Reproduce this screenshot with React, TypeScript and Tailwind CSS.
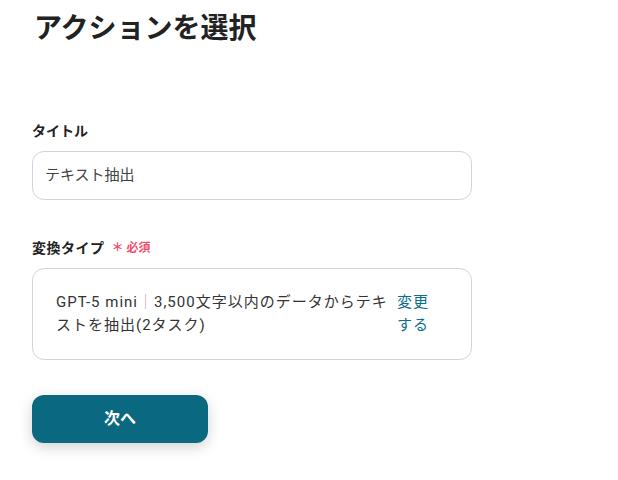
import React from 'react';

const FONT = { fontFamily: 'Roboto, "Noto Sans CJK JP", sans-serif' };

export default function App() {
  return (
    <div className="min-h-screen bg-white pl-[32px] text-[#2b2b2b]" style={FONT}>
      {/* Header */}
      <h1 className="pt-[8px] pl-[2px] text-[28px] font-bold leading-[42px] text-[#222]">アクションを選択</h1>

      {/* Title field */}
      <div className="mt-[71px] w-[440px]">
        <label className="block text-[14px] font-bold leading-[20px] text-[#222]">タイトル</label>
        <div className="mt-[10px] flex h-[49px] items-center rounded-[12px] border border-[#d2d4dc] px-[12px] text-[15px] text-[#444]">
          テキスト抽出
        </div>
      </div>

      {/* Conversion type */}
      <div className="mt-[38px] w-[440px]">
        <div className="flex items-center gap-[7px] leading-[20px]">
          <span className="text-[14px] font-bold tracking-[0.5px] text-[#222]">変換タイプ</span>
          <span className="text-[12px] font-bold text-[#f0506e]">＊ 必須</span>
        </div>
        <div className="mt-[10px] flex items-start rounded-[12px] border border-[#d2d4dc] py-[22px] pl-[23px] pr-[40px]">
          <p className="flex-1 text-[15px] leading-[23px] tracking-[1px] text-[#333]">
            GPT-5 mini<span className="text-[#c9a6b8]">｜</span>3,500文字以内のデータからテキストを抽出(2タスク)
          </p>
          <button className="ml-[8px] w-[34px] shrink-0 text-left text-[15px] leading-[23px] tracking-[1px] text-[#0b6e8a]">変更する</button>
        </div>
      </div>

      {/* Next */}
      <button className="mt-[35px] flex h-[48px] w-[176px] items-center justify-center rounded-[12px] bg-[#0b6881] text-[16px] font-bold text-white shadow-[0_4px_14px_rgba(0,0,0,0.18)]">
        次へ
      </button>
    </div>
  );
}
